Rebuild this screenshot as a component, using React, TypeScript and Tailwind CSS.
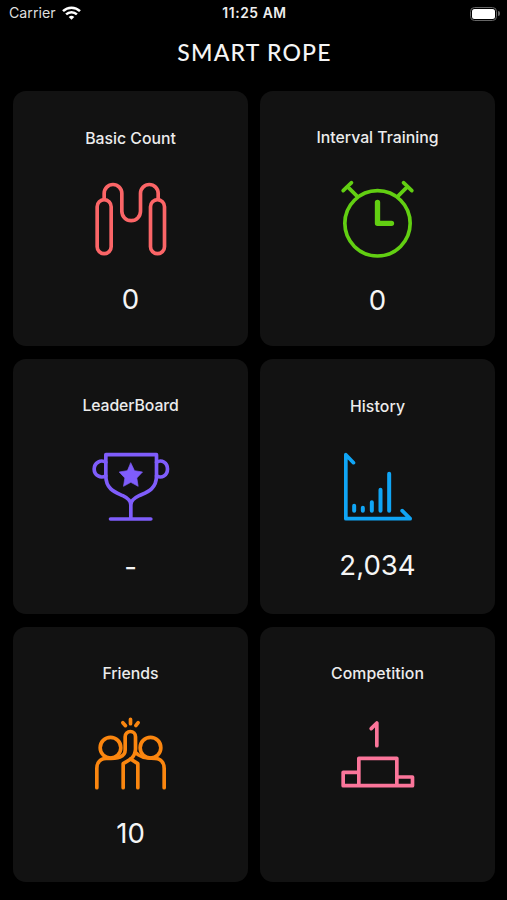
import type { ReactNode } from 'react'

interface CardItem {
  title: string
  titleClass: string
  value?: string
  valueClass?: string
  color: string
  iconClass: string
  icon: ReactNode
}

const cards: CardItem[] = [
  {
    title: 'Basic Count',
    titleClass: 'mt-[38px]',
    value: '0',
    valueClass: 'mt-[11px]',
    color: 'text-[#fb6567]',
    iconClass: 'mt-[21px]',
    icon: (
      <>
        <rect x="51" y="89" width="42" height="162" rx="21" />
        <rect x="211" y="89" width="42" height="162" rx="21" />
        <path d="M72 88V70a26.500 26.500 0 0 1 53 0V124a28 28 0 0 0 56 0V70a26.500 26.500 0 0 1 53 0V88" />
      </>
    ),
  },
  {
    title: 'Interval Training',
    titleClass: 'mt-[37px]',
    value: '0',
    valueClass: 'mt-[12px]',
    color: 'text-[#62cf12]',
    iconClass: 'mt-[22px]',
    icon: (
      <>
        <circle cx="151" cy="160" r="98" />
        <path d="M48 62L73 38M61 50L91 80M229 38L254 62M241 50L211 80" />
        <path d="M151 97V160H193" strokeWidth="16" />
      </>
    ),
  },
  {
    title: 'LeaderBoard',
    titleClass: 'mt-[37px] tracking-[-0.1px]',
    value: '-',
    valueClass: 'mt-[9px]',
    color: 'text-[#7f5dfb]',
    iconClass: 'mt-[24px]',
    icon: (
      <>
        <path d="M77 44H229V108C229 150 196 158 177 167C162 174 152 181 152 195C152 181 143 174 128 167C109 158 77 150 77 108ZM152 190V236M91 237H212" />
        <path d="M77 67C62 57 42 68 42 87S62 117 77 107M229 67C244 57 262 68 262 87S244 117 229 107" />
        <path
          d="M152 69L163 92L187 96L170 114L174 139L152 127L130 139L134 114L117 96L141 92Z"
          fill="currentColor"
          strokeWidth="2"
        />
      </>
    ),
  },
  {
    title: 'History',
    titleClass: 'mt-[38px] tracking-[0.1px]',
    value: '2,034',
    valueClass: 'mt-[7px]',
    color: 'text-[#10a5f5]',
    iconClass: 'mt-[23px]',
    icon: (
      <>
        <path d="M79 68L56 44V236H249L225 212" />
        <path d="M81 197V212M107 203V212M134 187V212M160 149V212M186 101V212" strokeWidth="12" />
      </>
    ),
  },
  {
    title: 'Friends',
    titleClass: 'mt-[37px]',
    value: '10',
    valueClass: 'mt-[10px]',
    color: 'text-[#fb860f]',
    iconClass: 'mt-[21.5px]',
    icon: (
      <>
        <circle cx="91" cy="128" r="31" />
        <circle cx="211" cy="128" r="31" />
        <path d="M151 43V56M128 53L136 62M174 53L167 62" />
        <path d="M50 248V190C50 173 61 161 78 160C113 160 135 157 135 135V95a15.500 15.500 0 0 1 31 0V132C166 146 162 153 152 162L129 176V248" />
        <path d="M252 248V190C252 173 241 161 224 160C198 160 177 156 166 142M151 162L173 176V248" />
      </>
    ),
  },
  {
    title: 'Competition',
    titleClass: 'mt-[37px] tracking-[0.1px]',
    color: 'text-[#fb759a]',
    iconClass: 'mt-[21.5px]',
    icon: (
      <>
        <path d="M132 71L149 54V122" />
        <path d="M95 242V160H209V242M95 202H48V242H256V216H209" />
      </>
    ),
  },
]

function StatusBar() {
  return (
    <div className="grid h-[27px] grid-cols-3 items-center pr-[7px] pl-[9px] text-[14px] leading-none text-[#dedede]">
      <div className="flex items-center gap-[6px]">
        <span className="text-[14.2px]">Carrier</span>
        <svg width="19" height="14" viewBox="0 0 19 14" fill="none" stroke="#fff" strokeWidth="2.5">
          <path d="M1 5.200a12.200 12.200 0 0 1 17 0M4.100 8.400a7.700 7.700 0 0 1 10.800 0" />
          <path d="M6.700 11a4.100 4.100 0 0 1 5.600 0L9.500 13.700Z" fill="#fff" stroke="none" />
        </svg>
      </div>
      <span className="text-center text-[13.8px] font-semibold tracking-[0.6px] whitespace-nowrap text-[#eee]">
        11:25 AM
      </span>
      <div className="flex items-center justify-end gap-px">
        <div className="h-[14px] w-[27px] rounded-[4.5px] border border-[#666] p-px">
          <div className="h-full rounded-[2.5px] bg-white" />
        </div>
        <div className="h-[5px] w-[2px] rounded-r-full bg-[#666]" />
      </div>
    </div>
  )
}

function Card({ item }: { item: CardItem }) {
  return (
    <div className="flex h-[255px] flex-col items-center rounded-[13px] bg-[#121212]">
      <h2 className={`h-[20px] text-[15.8px] leading-[20px] font-medium text-[#ececec] ${item.titleClass}`}>
        {item.title}
      </h2>
      <svg
        className={`size-[100px] shrink-0 ${item.color} ${item.iconClass}`}
        viewBox="2.5 0 300 300"
        fill="none"
        stroke="currentColor"
        strokeWidth="11"
        strokeLinecap="round"
        strokeLinejoin="round"
      >
        {item.icon}
      </svg>
      {item.value && (
        <p className={`h-[36px] text-[27.6px] leading-[36px] text-[#f5f5f5] ${item.valueClass}`}>{item.value}</p>
      )}
    </div>
  )
}

export default function App() {
  return (
    <div className="h-[900px] w-[507px] overflow-hidden bg-black font-['Inter',sans-serif]">
      <StatusBar />
      <h1 className="h-[64.4px] pt-[10px] pl-[2px] text-center font-['Lato',sans-serif] text-[23px] leading-[30px] font-medium tracking-[1.2px] text-[#f5f5f5]">
        SMART ROPE
      </h1>
      <main className="grid grid-cols-2 gap-x-[12px] gap-y-[12.6px] pr-[12px] pl-[13px]">
        {cards.map((item) => (
          <Card key={item.title} item={item} />
        ))}
      </main>
    </div>
  )
}
